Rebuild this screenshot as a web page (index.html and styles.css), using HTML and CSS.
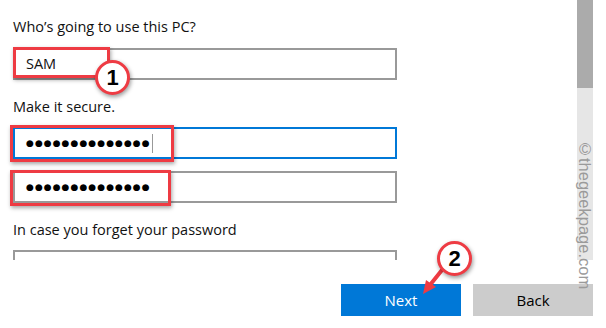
FILE: index.html
```html
<!DOCTYPE html>
<html>
<head>
<meta charset="utf-8">
<link rel="stylesheet" href="styles.css">
</head>
<body>
<div class="window">
  <div class="scroll">
    <div class="content">
      <p class="label first">Who’s going to use this PC?</p>
      <div class="field"><span class="value">SAM</span></div>
      <p class="label">Make it secure.</p>
      <div class="field focused"><span class="dots">●●●●●●●●●●●●●●</span><span class="caret"></span></div>
      <div class="field confirm"><span class="dots">●●●●●●●●●●●●●●</span></div>
      <p class="label">In case you forget your password</p>
      <div class="field"></div>
    </div>
    <div class="scrollbar">
      <div class="thumb"></div>
      <div class="track"></div>
    </div>
  </div>
  <div class="footer">
    <button class="btn primary">Next</button>
    <button class="btn">Back</button>
  </div>

  <div class="mark box-name"></div>
  <div class="mark box-pass"></div>
  <div class="mark box-confirm"></div>
  <div class="badge badge-one">1</div>
  <svg class="arrow" width="40" height="40" viewBox="0 0 40 40">
    <line x1="22" y1="8" x2="10" y2="23" class="arrow-line"/>
    <polygon points="3,32 6,18 16,25" class="arrow-head"/>
  </svg>
  <div class="badge badge-two">2</div>
  <div class="watermark">©thegeekpage.com</div>
</div>
</body>
</html>
```

FILE: styles.css
```css
html, body {
  margin: 0;
  padding: 0;
  background: #fff;
}
body {
  font-family: "Open Sans", "Noto Sans", sans-serif;
  font-size: 14.5px;
  color: #111;
}
.window {
  position: relative;
  width: 606px;
  height: 328px;
  overflow: hidden;
  background: #fff;
}
.scroll {
  display: flex;
  height: 260px;
  overflow: hidden;
}
.content {
  width: 577px;
  padding-left: 13px;
  box-sizing: border-box;
}
.label {
  margin: 18px 0 10px;
  line-height: 20px;
  height: 20px;
}
.label.first {
  margin-top: 17px;
  margin-bottom: 11px;
}
.field {
  width: 384px;
  height: 32px;
  box-sizing: border-box;
  border: 2px solid #999;
  display: flex;
  align-items: center;
  padding-left: 11px;
  background: #fff;
}
.field.focused {
  border-color: #0078d7;
}
.field.confirm {
  margin-top: 12px;
}
.field + .label {
  margin-top: 17px;
}
.value {
  font-size: 14.5px;
  line-height: 20px;
}
.dots {
  font-family: "DejaVu Sans", sans-serif;
  font-size: 9px;
  letter-spacing: 1.05px;
  line-height: 20px;
  color: #000;
}
.caret {
  display: inline-block;
  width: 1px;
  height: 19px;
  background: #999;
  margin-left: 1px;
}
.scrollbar {
  width: 16px;
  display: flex;
  flex-direction: column;
}
.thumb {
  height: 88px;
  background: #ababab;
}
.track {
  flex: 1;
  background: #e6e6e6;
}
.footer {
  height: 68px;
  display: flex;
  justify-content: flex-end;
  align-items: flex-start;
  gap: 12px;
  padding: 24px 13px 0 0;
  box-sizing: border-box;
  background: #fff;
}
.btn {
  width: 120px;
  height: 32px;
  border: none;
  font-family: "Open Sans", "Noto Sans", sans-serif;
  font-size: 15px;
  background: #cccccc;
  color: #000;
  padding: 0;
}
.btn.primary {
  background: #0078d7;
  color: #fff;
}

/* annotation overlays */
.mark {
  position: absolute;
  border: 3px solid #ee3b43;
  box-sizing: border-box;
  box-shadow: 1px 2px 4px rgba(0,0,0,0.35);
}
.box-name {
  left: 13px;
  top: 47px;
  width: 97px;
  height: 31px;
}
.box-pass {
  left: 10px;
  top: 125px;
  width: 164px;
  height: 37px;
}
.box-confirm {
  left: 10px;
  top: 170px;
  width: 161px;
  height: 36px;
}
.badge {
  position: absolute;
  width: 35px;
  height: 35px;
  box-sizing: border-box;
  border: 3px solid #ee3b43;
  border-radius: 50%;
  background: #fff;
  box-shadow: 1px 2px 4px rgba(0,0,0,0.4);
  font-family: "Liberation Sans", Arial, sans-serif;
  font-weight: bold;
  font-size: 22px;
  line-height: 29px;
  text-align: center;
  color: #000;
}
.badge-one {
  left: 95px;
  top: 60px;
}
.badge-two {
  left: 437px;
  top: 241px;
}
.arrow {
  position: absolute;
  left: 420px;
  top: 262px;
  overflow: visible;
}
.arrow-line {
  stroke: #ee3b43;
  stroke-width: 4;
  stroke-linecap: round;
}
.arrow-head {
  fill: #ee3b43;
}
.watermark {
  position: absolute;
  left: 577px;
  top: 140px;
  width: 16px;
  writing-mode: vertical-rl;
  font-family: "Liberation Sans", Arial, sans-serif;
  font-size: 16.5px;
  line-height: 16px;
  color: #9a9a9a;
}
```
